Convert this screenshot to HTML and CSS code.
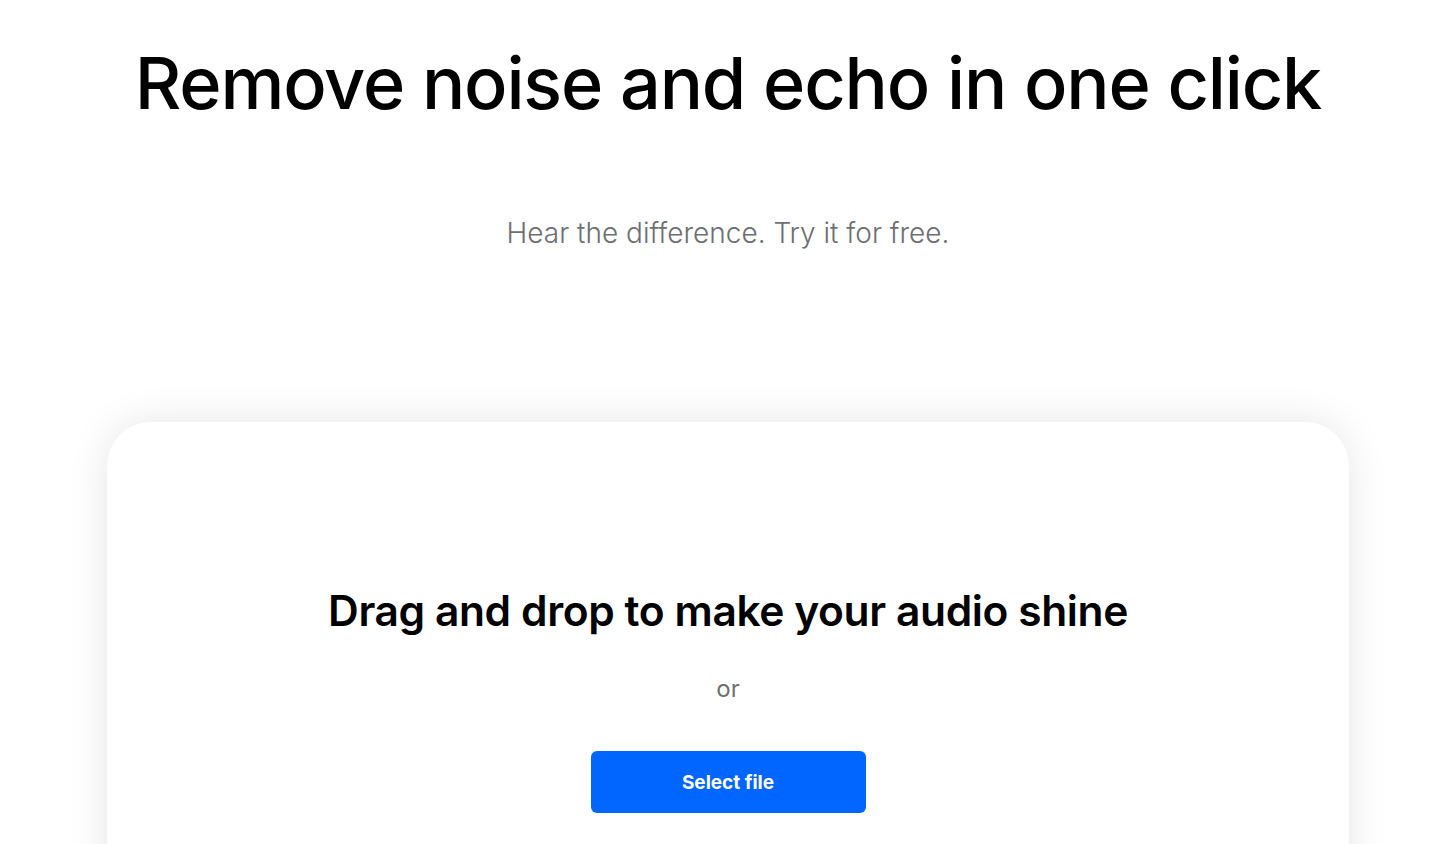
FILE: index.html
```html
<!DOCTYPE html>
<html lang="en">
<head>
<meta charset="utf-8">
<title>Remove noise and echo</title>
<link rel="stylesheet" href="styles.css">
</head>
<body>
<main class="page">
  <header class="hero">
    <h1 class="hero-title">Remove noise and echo in one click</h1>
    <p class="hero-sub">Hear the difference. Try it for free.</p>
  </header>
  <section class="card">
    <h2 class="card-title">Drag and drop to make your audio shine</h2>
    <p class="card-or">or</p>
    <button class="btn" type="button">Select file</button>
  </section>
</main>
</body>
</html>
```
FILE: styles.css
```css
* { box-sizing: border-box; }
html, body { margin: 0; padding: 0; background: #fff; }
body {
  font-family: Inter, "Noto Sans", "Liberation Sans", sans-serif;
  color: #000;
  overflow: hidden;
  height: 844px;
}
.page {
  display: flex;
  flex-direction: column;
  align-items: center;
}
.hero {
  display: flex;
  flex-direction: column;
  align-items: center;
}
.hero-title {
  margin: 35px 0 0;
  font-size: 72px;
  font-weight: 500;
  letter-spacing: -1.2px;
  line-height: 96px;
}
.hero-sub {
  margin: 84px 0 0;
  font-size: 28px;
  font-weight: 300;
  color: #6e6e73;
  line-height: 36px;
}
.card {
  margin-top: 171px;
  width: 1242px;
  height: 600px;
  border-radius: 44px;
  background: #fff;
  box-shadow: 0 0 40px rgba(0,0,0,0.10);
  display: flex;
  flex-direction: column;
  align-items: center;
  padding-top: 161px;
}
.card-title {
  margin: 0;
  font-size: 42.5px;
  font-weight: 600;
  letter-spacing: -0.4px;
  line-height: 56px;
}
.card-or {
  margin: 35px 0 0;
  font-size: 24px;
  font-weight: 400;
  color: #6e6e73;
  line-height: 30px;
}
.btn {
  margin-top: 47px;
  width: 275px;
  height: 62px;
  border: none;
  border-radius: 6px;
  background: #0066ff;
  color: #fff;
  font-family: Inter, "Noto Sans", sans-serif;
  font-size: 19px;
  font-weight: 700;
  cursor: pointer;
}
```
